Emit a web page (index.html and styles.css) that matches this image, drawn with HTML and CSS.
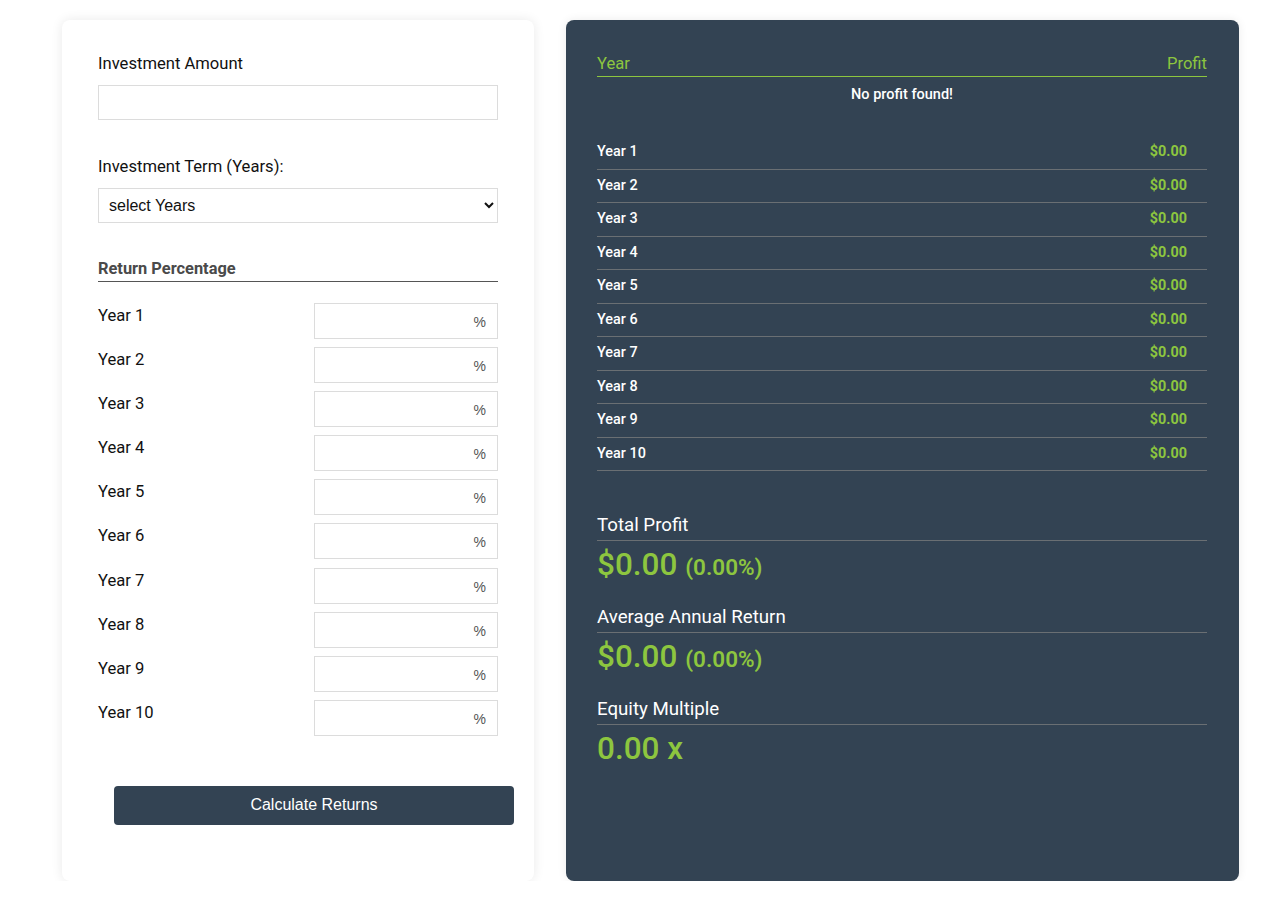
FILE: index.html
```html
<!DOCTYPE html>
<html>
<head>
<meta charset="utf-8">
<link rel="stylesheet" href="styles.css">
</head>
<body>
<div class="page">
  <div class="card form-card">
    <label class="field-label">Investment Amount</label>
    <input class="text-input" type="text">
    <label class="field-label second">Investment Term (Years):</label>
    <select class="select-input">
      <option>select Years</option>
    </select>
    <div class="section-title">Return Percentage</div>
    <div class="pct-list">
      <div class="pct-row"><span class="pct-label">Year 1</span><div class="pct-box"><input type="text"><span class="pct-sign">%</span></div></div>
      <div class="pct-row"><span class="pct-label">Year 2</span><div class="pct-box"><input type="text"><span class="pct-sign">%</span></div></div>
      <div class="pct-row"><span class="pct-label">Year 3</span><div class="pct-box"><input type="text"><span class="pct-sign">%</span></div></div>
      <div class="pct-row"><span class="pct-label">Year 4</span><div class="pct-box"><input type="text"><span class="pct-sign">%</span></div></div>
      <div class="pct-row"><span class="pct-label">Year 5</span><div class="pct-box"><input type="text"><span class="pct-sign">%</span></div></div>
      <div class="pct-row"><span class="pct-label">Year 6</span><div class="pct-box"><input type="text"><span class="pct-sign">%</span></div></div>
      <div class="pct-row"><span class="pct-label">Year 7</span><div class="pct-box"><input type="text"><span class="pct-sign">%</span></div></div>
      <div class="pct-row"><span class="pct-label">Year 8</span><div class="pct-box"><input type="text"><span class="pct-sign">%</span></div></div>
      <div class="pct-row"><span class="pct-label">Year 9</span><div class="pct-box"><input type="text"><span class="pct-sign">%</span></div></div>
      <div class="pct-row"><span class="pct-label">Year 10</span><div class="pct-box"><input type="text"><span class="pct-sign">%</span></div></div>
    </div>
    <button class="calc-btn">Calculate Returns</button>
  </div>

  <div class="card result-card">
    <div class="result-head"><span>Year</span><span>Profit</span></div>
    <div class="no-profit">No profit found!</div>
    <div class="year-list">
      <div class="year-row"><span>Year 1</span><span class="val">$0.00</span></div>
      <div class="year-row"><span>Year 2</span><span class="val">$0.00</span></div>
      <div class="year-row"><span>Year 3</span><span class="val">$0.00</span></div>
      <div class="year-row"><span>Year 4</span><span class="val">$0.00</span></div>
      <div class="year-row"><span>Year 5</span><span class="val">$0.00</span></div>
      <div class="year-row"><span>Year 6</span><span class="val">$0.00</span></div>
      <div class="year-row"><span>Year 7</span><span class="val">$0.00</span></div>
      <div class="year-row"><span>Year 8</span><span class="val">$0.00</span></div>
      <div class="year-row"><span>Year 9</span><span class="val">$0.00</span></div>
      <div class="year-row"><span>Year 10</span><span class="val">$0.00</span></div>
    </div>
    <div class="stats">
      <div class="stat">
        <div class="stat-label">Total Profit</div>
        <div class="stat-value">$0.00 <small>(0.00%)</small></div>
      </div>
      <div class="stat">
        <div class="stat-label">Average Annual Return</div>
        <div class="stat-value">$0.00 <small>(0.00%)</small></div>
      </div>
      <div class="stat">
        <div class="stat-label">Equity Multiple</div>
        <div class="stat-value">0.00 x</div>
      </div>
    </div>
  </div>
</div>
</body>
</html>
```

FILE: styles.css
```css
* { box-sizing: border-box; }
html, body { margin: 0; padding: 0; background: #ffffff; }
body { font-family: Roboto, "Liberation Sans", sans-serif; color: #111; }

.page {
  display: flex;
  align-items: stretch;
  gap: 32px;
  padding: 20px 0 0 62px;
}

.card { border-radius: 8px; }

.form-card {
  width: 472px;
  background: #fff;
  box-shadow: 0 0 12px rgba(0,0,0,0.09);
  padding: 34px 36px 56px 36px;
  display: flex;
  flex-direction: column;
}

.field-label {
  font-size: 16.6px;
  line-height: 19px;
  color: #111;
  margin-bottom: 12px;
}
.field-label.second { margin-top: 37px; margin-bottom: 12px; }

.text-input {
  width: 400px;
  height: 35px;
  border: 1px solid #dcdcdc;
  background: #fff;
  outline: none;
}

.select-input {
  width: 400px;
  height: 35px;
  border: 1px solid #dcdcdc;
  border-radius: 0;
  background: #fff;
  font-family: "Liberation Sans", Arial, sans-serif;
  font-size: 16px;
  color: #111;
  padding: 0 6px;
}

.section-title {
  margin-top: 36px;
  font-size: 16.4px;
  font-weight: 700;
  color: #4a4a4a;
  line-height: 19px;
  padding-bottom: 3px;
  border-bottom: 1px solid #555;
}

.pct-list {
  margin-top: 21px;
  display: flex;
  flex-direction: column;
  gap: 8.1px;
}
.pct-row {
  display: flex;
  justify-content: space-between;
  align-items: flex-start;
}
.pct-label {
  font-size: 16.6px;
  line-height: 19px;
  padding-top: 3px;
  color: #111;
}
.pct-box {
  width: 184px;
  height: 36px;
  border: 1px solid #dcdcdc;
  display: flex;
  align-items: center;
  background: #fff;
}
.pct-box input {
  flex: 1;
  min-width: 0;
  height: 100%;
  border: none;
  outline: none;
  background: transparent;
}
.pct-sign {
  font-family: "Liberation Sans", Arial, sans-serif;
  font-size: 14px;
  color: #555;
  margin-right: 11px;
  padding-top: 2px;
}

.calc-btn {
  margin-top: 50px;
  margin-left: 16px;
  width: 400px;
  height: 39px;
  border: none;
  border-radius: 4px;
  background: #334353;
  color: #fff;
  font-family: "Liberation Sans", Arial, sans-serif;
  font-size: 16px;
}

.result-card {
  width: 673px;
  background: #334353;
  box-shadow: 0 0 10px rgba(0,0,0,0.08);
  padding: 44px 32px 40px 31px;
  color: #fff;
}

.result-head {
  display: flex;
  justify-content: space-between;
  color: #8dc63f;
  font-size: 16.6px;
  line-height: 19px;
  margin-top: -10px;
  padding-bottom: 3px;
  border-bottom: 1px solid #8dc63f;
}

.no-profit {
  text-align: center;
  font-size: 14.5px;
  font-weight: 500;
  line-height: 17px;
  margin-top: 9px;
}

.year-list {
  margin-top: 33px;
}
.year-row {
  display: flex;
  justify-content: space-between;
  font-size: 14.4px;
  font-weight: 500;
  line-height: 16.5px;
  padding: 8px 20px 8px 0;
  border-bottom: 1px solid #6a6f73;
}
.year-row .val {
  color: #8dc63f;
  font-weight: 700;
}

.stats { margin-top: 43px; }
.stat { margin-bottom: 18px; }
.stat-label {
  font-size: 18.7px;
  line-height: 22px;
  padding-bottom: 4px;
  border-bottom: 1px solid #6a6f73;
}
.stat-value {
  margin-top: 1px;
  font-size: 31.5px;
  line-height: 46px;
  font-weight: 500;
  color: #8dc63f;
}
.stat-value small {
  font-size: 22.5px;
  font-weight: 600;
  line-height: 1;
}
```
